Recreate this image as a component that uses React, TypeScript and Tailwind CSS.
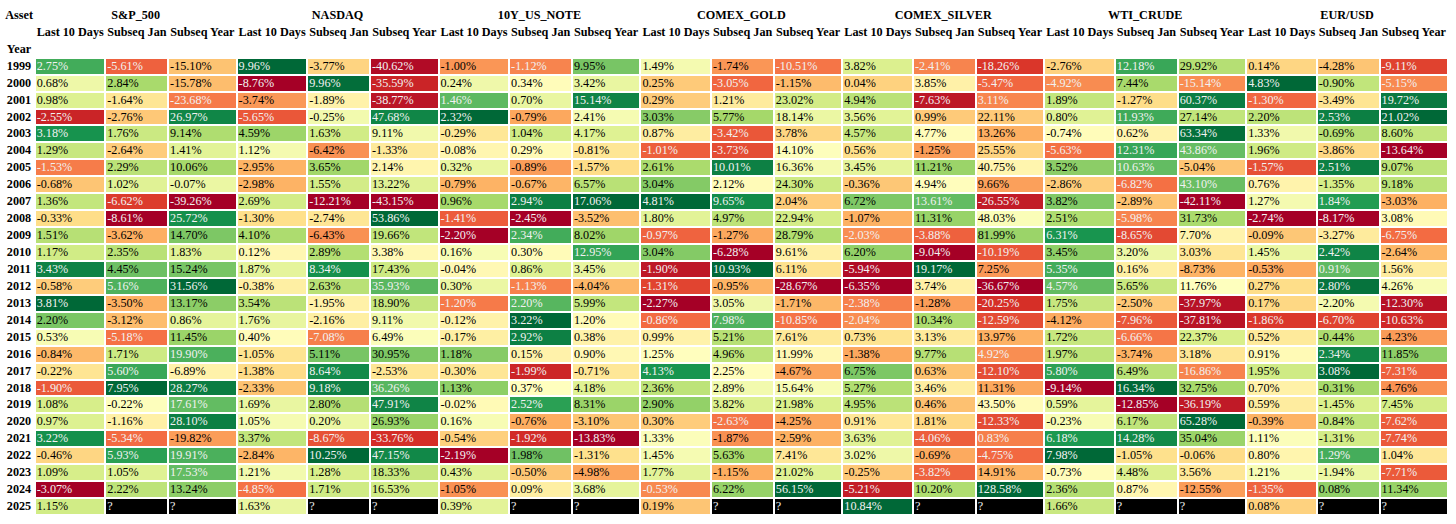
const ASSETS = ['S&P_500', 'NASDAQ', '10Y_US_NOTE', 'COMEX_GOLD', 'COMEX_SILVER', 'WTI_CRUDE', 'EUR/USD'];
const SUBS = ['Last 10 Days', 'Subseq Jan', 'Subseq Year'];
const COL_WIDTHS = ['w-[68.6px]', 'w-[60.8px]', 'w-[66.5px]'];

// one row per year: 7 assets x (last 10 days, subseq jan, subseq year)
const ROWS: [number, (number | null)[]][] = [
  [1999, [2.75, -5.61, -15.1, 9.96, -3.77, -40.62, -1.0, -1.12, 9.95, 1.49, -1.74, -10.51, 3.82, -2.41, -18.26, -2.76, 12.18, 29.92, 0.14, -4.28, -9.11]],
  [2000, [0.68, 2.84, -15.78, -8.76, 9.96, -35.59, 0.24, 0.34, 3.42, 0.25, -3.05, -1.15, 0.04, 3.85, -5.47, -4.92, 7.44, -15.14, 4.83, -0.9, -5.15]],
  [2001, [0.98, -1.64, -23.68, -3.74, -1.89, -38.77, 1.46, 0.7, 15.14, 0.29, 1.21, 23.02, 4.94, -7.63, 3.11, 1.89, -1.27, 60.37, -1.3, -3.49, 19.72]],
  [2002, [-2.55, -2.76, 26.97, -5.65, -0.25, 47.68, 2.32, -0.79, 2.41, 3.03, 5.77, 18.14, 3.56, 0.99, 22.11, 0.8, 11.93, 27.14, 2.2, 2.53, 21.02]],
  [2003, [3.18, 1.76, 9.14, 4.59, 1.63, 9.11, -0.29, 1.04, 4.17, 0.87, -3.42, 3.78, 4.57, 4.77, 13.26, -0.74, 0.62, 63.34, 1.33, -0.69, 8.6]],
  [2004, [1.29, -2.64, 1.41, 1.12, -6.42, -1.33, -0.08, 0.29, -0.81, -1.01, -3.73, 14.1, 0.56, -1.25, 25.55, -5.63, 12.31, 43.86, 1.96, -3.86, -13.64]],
  [2005, [-1.53, 2.29, 10.06, -2.95, 3.65, 2.14, 0.32, -0.89, -1.57, 2.61, 10.01, 16.36, 3.45, 11.21, 40.75, 3.52, 10.63, -5.04, -1.57, 2.51, 9.07]],
  [2006, [-0.68, 1.02, -0.07, -2.98, 1.55, 13.22, -0.79, -0.67, 6.57, 3.04, 2.12, 24.3, -0.36, 4.94, 9.66, -2.86, -6.82, 43.1, 0.76, -1.35, 9.18]],
  [2007, [1.36, -6.62, -39.26, 2.69, -12.21, -43.15, 0.96, 2.94, 17.06, 4.81, 9.65, 2.04, 6.72, 13.61, -26.55, 3.82, -2.89, -42.11, 1.27, 1.84, -3.03]],
  [2008, [-0.33, -8.61, 25.72, -1.3, -2.74, 53.86, -1.41, -2.45, -3.52, 1.8, 4.97, 22.94, -1.07, 11.31, 48.03, 2.51, -5.98, 31.73, -2.74, -8.17, 3.08]],
  [2009, [1.51, -3.62, 14.7, 4.1, -6.43, 19.66, -2.2, 2.34, 8.02, -0.97, -1.27, 28.79, -2.03, -3.88, 81.99, 6.31, -8.65, 7.7, -0.09, -3.27, -6.75]],
  [2010, [1.17, 2.35, 1.83, 0.12, 2.89, 3.38, 0.16, 0.3, 12.95, 3.04, -6.28, 9.61, 6.2, -9.04, -10.19, 3.45, 3.2, 3.03, 1.45, 2.42, -2.64]],
  [2011, [3.43, 4.45, 15.24, 1.87, 8.34, 17.43, -0.04, 0.86, 3.45, -1.9, 10.93, 6.11, -5.94, 19.17, 7.25, 5.35, 0.16, -8.73, -0.53, 0.91, 1.56]],
  [2012, [-0.58, 5.16, 31.56, -0.38, 2.63, 35.93, 0.3, -1.13, -4.04, -1.31, -0.95, -28.67, -6.35, 3.74, -36.67, 4.57, 5.65, 11.76, 0.27, 2.8, 4.26]],
  [2013, [3.81, -3.5, 13.17, 3.54, -1.95, 18.9, -1.2, 2.2, 5.99, -2.27, 3.05, -1.71, -2.38, -1.28, -20.25, 1.75, -2.5, -37.97, 0.17, -2.2, -12.3]],
  [2014, [2.2, -3.12, 0.86, 1.76, -2.16, 9.11, -0.12, 3.22, 1.2, -0.86, 7.98, -10.85, -2.04, 10.34, -12.59, -4.12, -7.96, -37.81, -1.86, -6.7, -10.63]],
  [2015, [0.53, -5.18, 11.45, 0.4, -7.08, 6.49, -0.17, 2.92, 0.38, 0.99, 5.21, 7.61, 0.73, 3.13, 13.97, 1.72, -6.66, 22.37, 0.52, -0.44, -4.23]],
  [2016, [-0.84, 1.71, 19.9, -1.05, 5.11, 30.95, 1.18, 0.15, 0.9, 1.25, 4.96, 11.99, -1.38, 9.77, 4.92, 1.97, -3.74, 3.18, 0.91, 2.34, 11.85]],
  [2017, [-0.22, 5.6, -6.89, -1.38, 8.64, -2.53, -0.3, -1.99, -0.71, 4.13, 2.25, -4.67, 6.75, 0.63, -12.1, 5.8, 6.49, -16.86, 1.95, 3.08, -7.31]],
  [2018, [-1.9, 7.95, 28.27, -2.33, 9.18, 36.26, 1.13, 0.37, 4.18, 2.36, 2.89, 15.64, 5.27, 3.46, 11.31, -9.14, 16.34, 32.75, 0.7, -0.31, -4.76]],
  [2019, [1.08, -0.22, 17.61, 1.69, 2.8, 47.91, -0.02, 2.52, 8.31, 2.9, 3.82, 21.98, 4.95, 0.46, 43.5, 0.59, -12.85, -36.19, 0.59, -1.45, 7.45]],
  [2020, [0.97, -1.16, 28.1, 1.05, 0.2, 26.93, 0.16, -0.76, -3.1, 0.3, -2.63, -4.25, 0.91, 1.81, -12.33, -0.23, 6.17, 65.28, -0.39, -0.84, -7.62]],
  [2021, [3.22, -5.34, -19.82, 3.37, -8.67, -33.76, -0.54, -1.92, -13.83, 1.33, -1.87, -2.59, 3.63, -4.06, 0.83, 6.18, 14.28, 35.04, 1.11, -1.31, -7.74]],
  [2022, [-0.46, 5.93, 19.91, -2.84, 10.25, 47.15, -2.19, 1.98, -1.31, 1.45, 5.63, 7.41, 3.02, -0.69, -4.75, 7.98, -1.05, -0.06, 0.8, 1.29, 1.04]],
  [2023, [1.09, 1.05, 17.53, 1.21, 1.28, 18.33, 0.43, -0.5, -4.98, 1.77, -1.15, 21.02, -0.25, -3.82, 14.91, -0.73, 4.48, 3.56, 1.21, -1.94, -7.71]],
  [2024, [-3.07, 2.22, 13.24, -4.85, 1.71, 16.53, -1.05, 0.09, 3.68, -0.53, 6.22, 56.15, -5.21, 10.2, 128.58, 2.36, 0.87, -12.55, -1.35, 0.08, 11.34]],
  [2025, [1.15, null, null, 1.63, null, null, 0.39, null, null, 0.19, null, null, 10.84, null, null, 1.66, null, null, 0.08, null, null]],
];

// RdYlGn control points, same as matplotlib
const STOPS = [
  [165, 0, 38], [215, 48, 39], [244, 109, 67], [253, 174, 97], [254, 224, 139], [255, 255, 191],
  [217, 239, 139], [166, 217, 106], [102, 189, 99], [26, 152, 80], [0, 104, 55],
];

function rdylgn(x: number): number[] {
  const i = Math.min(255, Math.max(0, Math.floor(x * 256)));
  const p = (i / 255) * 10;
  const k = Math.min(9, Math.floor(p));
  const f = p - k;
  return STOPS[k].map((c, j) => Math.round(c + (STOPS[k + 1][j] - c) * f));
}

function luminance(rgb: number[]) {
  const [r, g, b] = rgb.map((v) => {
    const c = v / 255;
    return c <= 0.04045 ? c / 12.92 : Math.pow((c + 0.055) / 1.055, 2.4);
  });
  return 0.2126 * r + 0.7152 * g + 0.0722 * b;
}

const RANGES = ROWS[0][1].map((_, col) => {
  const vals = ROWS.map(([, v]) => v[col]).filter((v): v is number => v !== null);
  return [Math.min(...vals), Math.max(...vals)];
});

function cellStyle(value: number | null, col: number) {
  if (value === null) return { backgroundColor: '#000000', color: '#f1f1f1' };
  const [lo, hi] = RANGES[col];
  const rgb = rdylgn((value - lo) / (hi - lo));
  return {
    backgroundColor: `rgb(${rgb[0]}, ${rgb[1]}, ${rgb[2]})`,
    color: luminance(rgb) < 0.408 ? '#f1f1f1' : '#000000',
  };
}

const cell = 'h-[14.93px] py-0 px-[1px] leading-[14.93px] whitespace-nowrap';

export default function App() {
  return (
    <div className="min-h-[524px] bg-white pl-[2.3px] pt-[5.9px]">
      <table className="table-fixed w-[1446.7px] border-separate border-spacing-[2px] font-['Liberation_Serif','Times_New_Roman',serif] text-[12.2px] text-black">
        <colgroup>
          <col className="w-[29.4px]" />
          {ASSETS.flatMap((asset) => COL_WIDTHS.map((w, i) => <col key={asset + i} className={w} />))}
        </colgroup>
        <thead>
          <tr>
            <th className={`${cell} text-center font-bold`}>Asset</th>
            {ASSETS.map((asset) => (
              <th key={asset} colSpan={3} className={`${cell} text-center font-bold`}>
                {asset}
              </th>
            ))}
          </tr>
          <tr>
            <th className={cell} />
            {ASSETS.flatMap((asset) =>
              SUBS.map((sub) => (
                <th key={asset + sub} className={`${cell} text-center font-bold`}>
                  {sub}
                </th>
              ))
            )}
          </tr>
          <tr>
            <th className={`${cell} text-center font-bold`}>Year</th>
            {ASSETS.flatMap((asset) => SUBS.map((sub) => <th key={asset + sub} className={cell} />))}
          </tr>
        </thead>
        <tbody>
          {ROWS.map(([year, values]) => (
            <tr key={year}>
              <th className={`${cell} text-center font-bold`}>{year}</th>
              {values.map((v, i) => (
                <td key={i} className={`${cell} text-left font-normal`} style={cellStyle(v, i)}>
                  {v === null ? '?' : `${v.toFixed(2)}%`}
                </td>
              ))}
            </tr>
          ))}
        </tbody>
      </table>
    </div>
  );
}
